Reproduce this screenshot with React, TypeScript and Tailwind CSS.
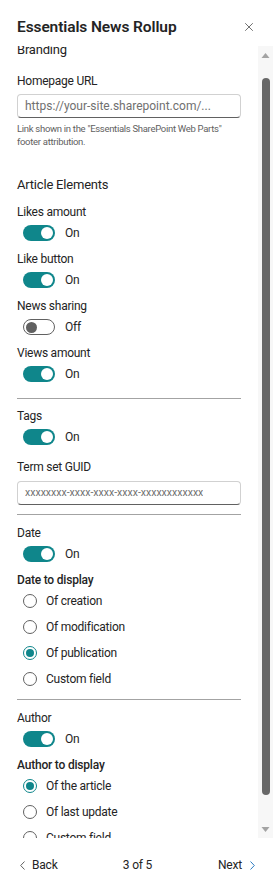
import { X } from "lucide-react";

const font = { fontFamily: 'Roboto, "Open Sans", sans-serif' };

const Toggle = ({ on }: { on: boolean }) => (
  <div className="flex h-[22px] items-center pl-[6px]">
    {on ? (
      <div className="flex h-[16px] w-[32px] items-center justify-end rounded-full bg-[#0f868b] pr-[2px]">
        <div className="size-[12px] rounded-full bg-white" />
      </div>
    ) : (
      <div className="flex h-[16px] w-[32px] items-center rounded-full border border-[#616161] bg-white pl-[2px]">
        <div className="size-[11px] rounded-full bg-[#616161]" />
      </div>
    )}
    <span className="ml-[10px] text-[12px] tracking-[-0.25px] text-[#242424]">{on ? "On" : "Off"}</span>
  </div>
);

const Label = ({ text, className }: { text: string; className?: string }) => (
  <div className={"text-[12px] leading-5 tracking-[-0.25px] text-[#242424] " + (className ?? "")}>{text}</div>
);

const ToggleField = ({ label, on, className }: { label: string; on: boolean; className?: string }) => (
  <div className={className}>
    <Label text={label} />
    <Toggle on={on} />
  </div>
);

const Radio = ({ label, checked }: { label: string; checked?: boolean }) => (
  <div className="flex h-[26px] items-center pl-[6px]">
    <div
      className={
        "flex size-[14px] items-center justify-center rounded-full border " +
        (checked ? "border-[#0f868b]" : "border-[#616161]")
      }
    >
      {checked && <div className="size-[8px] rounded-full bg-[#0f868b]" />}
    </div>
    <span className="ml-[9px] text-[12px] tracking-[-0.25px] text-[#242424]">{label}</span>
  </div>
);

const Divider = ({ className }: { className?: string }) => (
  <div className={"h-px bg-[#a3a3a3] " + (className ?? "")} />
);

const TextInput = ({ placeholder, small, className }: { placeholder: string; small?: boolean; className?: string }) => (
  <div
    className={
      "flex h-[24px] items-center rounded-[4px] border border-[#d1d1d1] border-b-[#616161] px-[7px] " +
      (className ?? "")
    }
  >
    <span className={(small ? "text-[10.5px] " : "text-[12px] ") + "truncate text-[#707070]"}>{placeholder}</span>
  </div>
);

export default function App() {
  return (
    <div className="flex h-[891px] w-[276px] flex-col overflow-hidden bg-white" style={font}>
      {/* header */}
      <div className="flex h-[46px] shrink-0 items-center justify-between pl-[17px] pr-[20px] pt-[7px]">
        <h1 className="text-[15.5px] font-semibold leading-[22px] tracking-[-0.1px] text-[#242424]">
          Essentials News Rollup
        </h1>
        <X size={14} strokeWidth={1.3} className="text-[#424242]" />
      </div>

      {/* scroll area */}
      <div className="flex h-[792px] shrink-0">
        <div className="w-[258px] overflow-hidden pl-[17px] pr-[17px]">
          <div className="-mt-[6px] flex flex-col">
            <div className="text-[13px] leading-5 tracking-[-0.2px] text-[#242424]">Branding</div>
            <Label text="Homepage URL" className="mt-[11px]" />
            <TextInput className="mt-[3px]" placeholder="https://your-site.sharepoint.com/..." />
            <p className="mt-[4px] text-[9.5px] leading-[13px] tracking-[-0.3px] text-[#616161]">
              Link shown in the "Essentials SharePoint Web Parts" footer attribution.
            </p>

            <div className="mt-[27px] text-[13px] leading-5 tracking-[-0.2px] text-[#242424]">Article Elements</div>
            <ToggleField className="mt-[7px]" label="Likes amount" on />
            <ToggleField className="mt-[5px]" label="Like button" on />
            <ToggleField className="mt-[5px]" label="News sharing" on={false} />
            <ToggleField className="mt-[5px]" label="Views amount" on />

            <Divider className="mt-[13px]" />
            <ToggleField className="mt-[7px]" label="Tags" on />
            <Label text="Term set GUID" className="mt-[9px]" />
            <TextInput className="mt-[4px]" small placeholder="xxxxxxxx-xxxx-xxxx-xxxx-xxxxxxxxxxxx" />

            <Divider className="mt-[9px]" />
            <ToggleField className="mt-[8px]" label="Date" on />
            <div className="mt-[7px] text-[12px] font-medium leading-4 tracking-[-0.2px] text-[#242424]">
              Date to display
            </div>
            <Radio label="Of creation" />
            <Radio label="Of modification" />
            <Radio label="Of publication" checked />
            <Radio label="Custom field" />

            <Divider className="mt-[7px]" />
            <ToggleField className="mt-[8px]" label="Author" on />
            <div className="mt-[7px] text-[12px] font-medium leading-4 tracking-[-0.2px] text-[#242424]">
              Author to display
            </div>
            <Radio label="Of the article" checked />
            <Radio label="Of last update" />
            <Radio label="Custom field" />
          </div>
        </div>

        {/* scrollbar */}
        <div className="flex w-[15px] flex-col items-center bg-[#f7f7f7]">
          <svg width="9" height="15" viewBox="0 0 9 15" className="mt-[2px]">
            <path d="M0.5 10 L4.5 5 L8.5 10 Z" fill="#a3a3a3" />
          </svg>
          <div className="mt-[15px] h-[717px] w-[8px] rounded-full bg-[#686868]" />
          <div className="flex-1" />
          <svg width="9" height="15" viewBox="0 0 9 15" className="mb-[1px]">
            <path d="M0.5 5 L4.5 10 L8.5 5 Z" fill="#a3a3a3" />
          </svg>
        </div>
        <div className="w-[3px]" />
      </div>

      {/* footer */}
      <div className="grid flex-1 grid-cols-3 items-center pl-[20px] pr-[21px] pt-[1px] text-[12px] tracking-[-0.2px] text-[#242424]">
        <div className="flex items-center gap-[7px]">
          <svg width="5" height="9" viewBox="0 0 5 9">
            <path d="M4.5 0.5 L0.7 4.5 L4.5 8.5" fill="none" stroke="#616161" strokeWidth="1" />
          </svg>
          <span>Back</span>
        </div>
        <span className="text-center">3 of 5</span>
        <div className="flex items-center justify-end gap-[8px]">
          <span>Next</span>
          <svg width="5" height="9" viewBox="0 0 5 9">
            <path d="M0.5 0.5 L4.3 4.5 L0.5 8.5" fill="none" stroke="#2b7cc4" strokeWidth="1" />
          </svg>
        </div>
      </div>
    </div>
  );
}
